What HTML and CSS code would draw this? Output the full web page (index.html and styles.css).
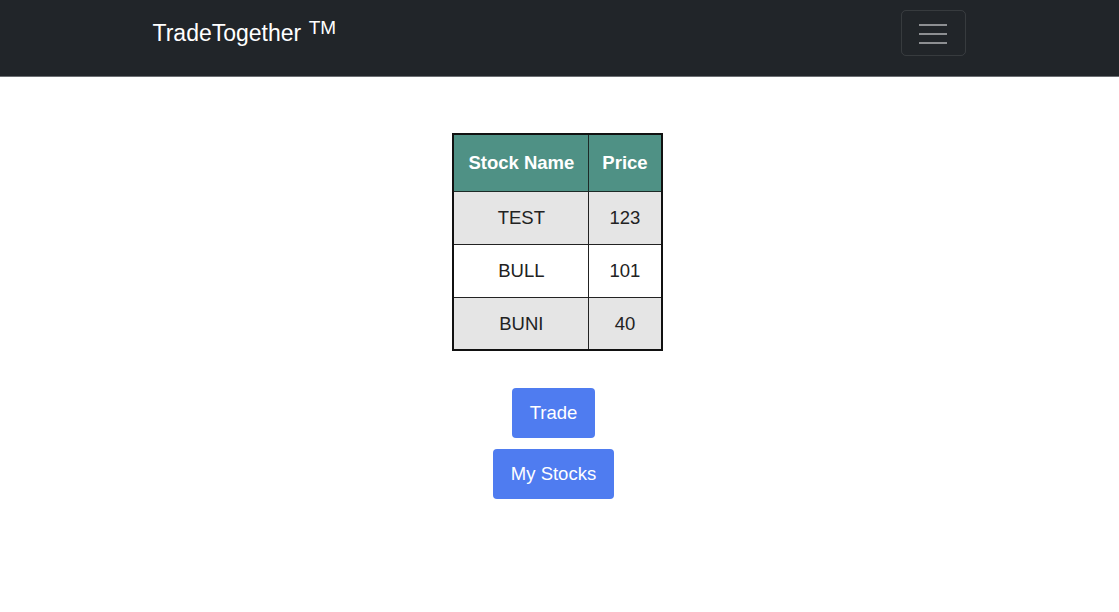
FILE: index.html
```html
<!DOCTYPE html>
<html lang="en">
<head>
    <meta charset="UTF-8">
    <meta name="viewport" content="width=device-width, initial-scale=1.0">
    <title>TradeTogether</title>
    <link rel="stylesheet" href="styles.css">
</head>
<body>

    <nav class="navbar">
        <div class="nav-inner">
            <a class="brand" href="#">TradeTogether <sup>TM</sup></a>
            <button class="toggler" aria-label="Toggle navigation">
                <svg width="30" height="24" viewBox="0 0 30 24">
                    <path d="M1 4h28M1 13h28M1 22h28" stroke="#8d8f92" stroke-width="2" />
                </svg>
            </button>
        </div>
    </nav>

    <main class="content">
        <table class="stocks">
            <thead>
                <tr>
                    <th>Stock Name</th>
                    <th>Price</th>
                </tr>
            </thead>
            <tbody>
                <tr><td>TEST</td><td>123</td></tr>
                <tr><td>BULL</td><td>101</td></tr>
                <tr><td>BUNI</td><td>40</td></tr>
            </tbody>
        </table>

        <div class="actions">
            <button class="btn">Trade</button>
            <button class="btn">My Stocks</button>
        </div>
    </main>

</body>
</html>
```

FILE: styles.css
```css
body {
    font-family: "Liberation Sans", Arial, sans-serif;
    margin: 0;
    padding: 0;
    background: #fff;
    color: #212529;
}

.navbar {
    background: #212529;
    height: 77px;
    border-bottom: 1px solid #6b6e72;
    box-sizing: border-box;
}

.nav-inner {
    max-width: 812px;
    margin: 0 auto;
    height: 100%;
    display: flex;
    align-items: flex-start;
    justify-content: space-between;
}

.brand {
    color: #fff;
    text-decoration: none;
    font-size: 23px;
    margin-top: 20px;
    margin-left: -1px;
}

.brand sup {
    font-size: 19px;
    vertical-align: 7px;
    line-height: 0;
    margin-left: 1px;
}

.toggler {
    margin-top: 10px;
    width: 65px;
    height: 46px;
    background: transparent;
    border: 1px solid rgba(255, 255, 255, 0.1);
    border-radius: 5px;
    display: flex;
    align-items: center;
    justify-content: center;
    padding: 0;
}

.content {
    display: flex;
    flex-direction: column;
    align-items: center;
    padding-top: 56px;
    padding-right: 12px;
}

.stocks {
    border-collapse: collapse;
    border: 2px solid #111;
    font-size: 18.5px;
    text-align: center;
    margin-left: 8px;
}

.stocks th {
    background: #4f9185;
    color: #fff;
    font-weight: bold;
    height: 56px;
    padding: 0 13px;
    border: 1px solid #1d2a27;
}

.stocks td {
    height: 52px;
    padding: 0 13px;
    border: 1px solid #222;
    color: #222;
}

.stocks tbody tr:last-child td {
    height: 51px;
}

.stocks tbody tr:nth-child(odd) td {
    background: #e5e5e5;
}

.stocks th:first-child,
.stocks td:first-child {
    width: 108px;
}

.actions {
    display: flex;
    flex-direction: column;
    align-items: center;
    gap: 11px;
    margin-top: 37px;
}

.btn {
    background: #4f7cf0;
    color: #fff;
    border: none;
    border-radius: 4px;
    font-family: "Liberation Sans", Arial, sans-serif;
    font-size: 18.5px;
    height: 50px;
    padding: 0 18px;
    cursor: pointer;
}
```
